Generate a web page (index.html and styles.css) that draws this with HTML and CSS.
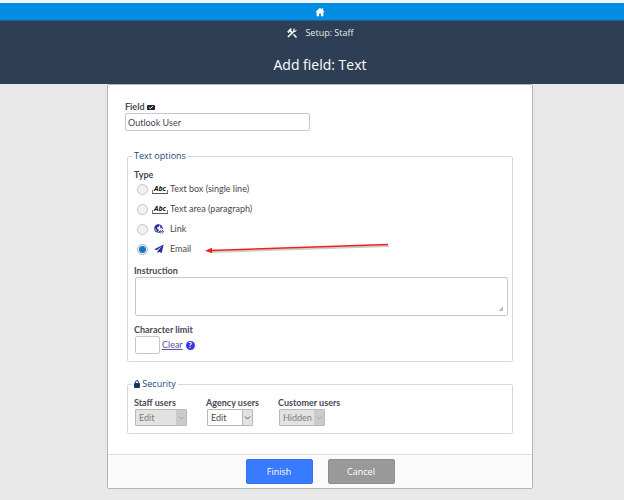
FILE: index.html
```html
<!DOCTYPE html>
<html lang="en">
<head>
    <meta charset="UTF-8">
    <meta name="viewport" content="width=device-width, initial-scale=1.0">
    <title>Add field: Text</title>
    <link rel="stylesheet" href="styles.css">
</head>
<body>

    <nav class="top-bar">
        <a href="#" aria-label="Home">
            <svg class="home-icon" viewBox="0 0 10 10"><path d="M5 .7L.4 5h1.200v4.300h2.500V6.400h1.800v2.900h2.500V5h1.200L8.200 3.500V1.300H7v1.200z"/></svg>
        </a>
    </nav>

    <header class="page-header">
        <a href="#" class="setup-link">
            <svg class="tools-icon" viewBox="0 0 24 24"><path d="M13.8 15.7l2.1-2.1 6.2 6.2-2.2 2.2zM17.5 10a3.5 3.5 0 0 0 3.2-4.9L18 7.8l-1.8-1.8 2.7-2.7a3.5 3.5 0 0 0-4.6 4.3l-1.9 1.9-1.8-1.8.7-.7-1.4-1.4 2.1-2.1a3 3 0 0 0-4.2 0L4.200 7l1.400 1.400H2.800l-.7.7 3.500 3.600.7-.7V9.200l1.400 1.400.7-.7 1.800 1.800L2.800 19.100l2.100 2.100L16.500 9.800a3.500 3.500 0 0 0 1 .2z"/></svg>
            <span>Setup: Staff</span>
        </a>
        <h1>Add field: Text</h1>
    </header>

    <form class="card">
        <div class="card-body">
            <div class="field-name">
                <label class="label" for="field-name">Field
                    <svg class="required-icon" viewBox="0 0 8 5"><rect width="8" height="5" rx="1" fill="#222230"/><path d="M2 2.500l1.200 1L6 1.200" fill="none" stroke="#fff"/></svg>
                </label>
                <input type="text" class="text-input" id="field-name" value="Outlook User">
            </div>

            <fieldset class="group">
                <legend>Text options</legend>
                <div class="label" id="type-label">Type</div>
                <div class="options" role="radiogroup" aria-labelledby="type-label">
                    <label class="option">
                        <input type="radio" name="type">
                        <span class="abc-icon">Abc</span>
                        <span>Text box (single line)</span>
                    </label>
                    <label class="option">
                        <input type="radio" name="type">
                        <span class="abc-icon">Abc</span>
                        <span>Text area (paragraph)</span>
                    </label>
                    <label class="option">
                        <input type="radio" name="type">
                        <svg class="option-icon" viewBox="0 0 10 10"><circle cx="4.500" cy="4.500" r="3.900" fill="#fff" stroke="#2b2b9c"/><path d="M1 2.500L3 .8l2.500.3L4.500 3 3 3.500l.5 1.500 1.500.5L4 8 2.500 7 2.200 5.200.8 4.200zM6.500 1.500L8.200 4 7 4.500 6 3z" fill="#2b2b9c"/><path d="M5.500 7.700h3M7 6.200h1.600a1.200 1.200 0 0 1 0 3H7.800" fill="none" stroke="#fff" stroke-width="2"/><path d="M5.200 7.800h3.300M6.600 6.400L5.200 7.800l1.400 1.400M8.200 6.200l1.400 1.600-1.400 1.400" fill="none" stroke="#2b2b9c"/></svg>
                        <span>Link</span>
                    </label>
                    <label class="option">
                        <input type="radio" name="type" checked>
                        <svg class="option-icon" viewBox="0 0 10 10"><path d="M9.700.5L.3 5.200l2.300 1.100L8 2.200 3.600 6.900v2.600l1.500-1.700 2.600 1.200z" fill="#2b2b9c"/></svg>
                        <span>Email</span>
                        <svg class="arrow" viewBox="0 0 186 12">
                            <path d="M7 9L184 3" stroke="#ccc" stroke-width="2"/>
                            <path d="M5 7.500L183 1.500" stroke="#f21d1d" stroke-width="1.500"/>
                            <path d="M0 7.700L7 4.700V10.300z" fill="#f21d1d"/>
                        </svg>
                    </label>
                </div>

                <label class="label" for="instruction">Instruction</label>
                <textarea class="text-input" id="instruction"></textarea>

                <label class="label" for="limit">Character limit</label>
                <div class="limit-row">
                    <input type="text" class="text-input limit-input" id="limit">
                    <a href="#" class="clear-link">Clear</a>
                    <button type="button" class="help" aria-label="Help">?</button>
                </div>
            </fieldset>

            <fieldset class="group">
                <legend>
                    <svg class="lock-icon" viewBox="0 0 6 8"><path d="M1.500 3.500V2.200a1.500 1.500 0 0 1 3 0v1.300" fill="none" stroke="#12346b"/><rect y="3" width="6" height="5" rx="1" fill="#12346b"/></svg>
                    Security
                </legend>
                <div class="security">
                    <div>
                        <label class="label" for="staff">Staff users</label>
                        <select id="staff" class="wide" disabled><option>Edit</option></select>
                    </div>
                    <div>
                        <label class="label" for="agency">Agency users</label>
                        <select id="agency"><option>Edit</option></select>
                    </div>
                    <div>
                        <label class="label" for="customer">Customer users</label>
                        <select id="customer" disabled><option>Hidden</option></select>
                    </div>
                </div>
            </fieldset>
        </div>

        <footer class="card-footer">
            <button type="submit" class="btn btn-finish">Finish</button>
            <button type="button" class="btn btn-cancel">Cancel</button>
        </footer>
    </form>

</body>
</html>
```
FILE: styles.css
```css
:root {
    --navy: #2e3e54;
    --blue: #028de2;
    --text: #484852;
    --border: #c6c6cc;
    --ui-font: "Open Sans", "Noto Sans", sans-serif;
    --form-font: Lato, sans-serif;
}

* {
    box-sizing: border-box;
}

body {
    margin: 0;
    background: #e8e8e8;
    color: var(--text);
    font: 9px/12px var(--form-font);
}

.top-bar {
    display: flex;
    justify-content: center;
    height: 21px;
    padding: 4px 0 0 16px;
    border-top: 3px solid #f4f4f4;
    border-bottom: 1px solid #21608f;
    background: var(--blue);
}

.top-bar a {
    display: flex;
    height: 10px;
}

.home-icon {
    width: 10px;
    height: 10px;
    fill: #fff;
}

.page-header {
    display: flex;
    flex-direction: column;
    align-items: center;
    gap: 15px;
    height: 63px;
    padding: 6px 0 0 16px;
    background: var(--navy);
    color: #fff;
    font-family: var(--ui-font);
}

.setup-link {
    display: flex;
    align-items: center;
    gap: 7px;
    color: #e6e9ed;
    text-decoration: none;
}

.tools-icon {
    width: 12px;
    height: 12px;
    fill: #fff;
}

h1 {
    margin: 0;
    font-size: 14px;
    line-height: 22px;
    font-weight: 400;
}

.card {
    margin: 0 91px 12px 107px;
    border: 1px solid #b5b5b5;
    border-radius: 2px;
    background: #fff;
}

.card-body {
    padding: 16px 19px 20px;
}

.label {
    display: block;
    font-weight: 700;
}

.field-name {
    margin: 0 0 19px -2px;
}

.required-icon {
    width: 8px;
    height: 5px;
}

.text-input {
    display: block;
    width: 100%;
    height: 18px;
    padding: 0 2px;
    border: 1px solid var(--border);
    border-radius: 2px;
    background: #fff;
    color: var(--text);
    font: 9px/12px var(--form-font);
}

.field-name .text-input {
    width: 185px;
}

.group {
    margin: 0;
    padding: 7px 4px;
    border: 1px solid #d8d8d8;
    border-radius: 2px;
}

.group + .group {
    margin-top: 16px;
}

.group > .label,
.options,
.security {
    margin-left: 2px;
}

legend {
    padding: 0 2px;
    color: #244574;
    font-family: var(--ui-font);
}

.lock-icon {
    width: 6px;
    height: 8px;
    vertical-align: -1px;
}

.options {
    margin-top: -2px;
    margin-bottom: 6px;
}

.option {
    display: flex;
    align-items: center;
    height: 20px;
    padding-left: 3px;
}

.option input {
    appearance: none;
    width: 11px;
    height: 11px;
    margin: 0 4px 0 0;
    border: 1px solid #c4c4c4;
    border-radius: 50%;
    background: #f1f1f1;
}

.option input:checked {
    border-color: #9fb9cc;
    background: radial-gradient(circle, #1878b8 3px, #e6f0f7 4px);
}

.abc-icon {
    width: 16px;
    height: 9px;
    margin-right: 2px;
    border-bottom: 1px solid #555;
    background:
        linear-gradient(#777, #777) left bottom / 1px 3px no-repeat,
        linear-gradient(#777, #777) right bottom / 1px 3px no-repeat;
    color: #111;
    font: italic 700 7px/8px "Open Sans", sans-serif;
    text-align: center;
}

.option-icon {
    width: 10px;
    height: 10px;
    margin: 0 6px 0 2px;
}

.arrow {
    width: 186px;
    height: 12px;
    margin-left: 14px;
}

textarea.text-input {
    height: 39px;
    margin-bottom: 8px;
    resize: vertical;
}

textarea::-webkit-resizer {
    background: linear-gradient(135deg, #fff 60%, #bbb 60%) center / 6px 6px no-repeat;
}

#instruction,
.limit-row {
    margin-left: 3px;
}

#instruction {
    width: calc(100% - 3px);
}

.limit-row {
    display: flex;
    align-items: center;
    gap: 2px;
}

.limit-input {
    width: 25px;
}

.clear-link {
    color: #5750a5;
}

.help {
    width: 9px;
    height: 9px;
    padding: 0;
    margin-left: 1px;
    border: 0;
    border-radius: 50%;
    background: #3636e8;
    color: #fff;
    font: 700 8px/9px var(--form-font);
}

.security {
    display: grid;
    grid-template-columns: 72px 72px auto;
}

select {
    appearance: none;
    display: block;
    width: 46px;
    height: 17px;
    margin-left: 1px;
    padding: 0 12px 0 3px;
    border: 1px solid #b8b8b8;
    border-radius: 1px;
    background: url("data:image/svg+xml,%3Csvg xmlns='http://www.w3.org/2000/svg' viewBox='0 0 10 15'%3E%3Cpath d='M0 0h10v15H0z' fill='%23e2e2e2'/%3E%3Cpath d='M.5 0v15' stroke='%23b8b8b8'/%3E%3Cpath d='M3 6.500l2.500 2.500L8 6.500' fill='none' stroke='%23555'/%3E%3C/svg%3E") right / 10px 15px no-repeat #fff;
    color: var(--text);
    font: 9px/12px var(--form-font);
}

select.wide {
    width: 52px;
}

select:disabled {
    background-color: #e2e2e2;
    background-image: url("data:image/svg+xml,%3Csvg xmlns='http://www.w3.org/2000/svg' viewBox='0 0 10 15'%3E%3Cpath d='M0 0h10v15H0z' fill='%23cbcbcb'/%3E%3Cpath d='M3 6.500l2.500 2.500L8 6.500' fill='none' stroke='%23a0a0a0'/%3E%3C/svg%3E");
    color: #808080;
    opacity: 1;
}

.card-footer {
    display: flex;
    justify-content: center;
    gap: 15px;
    padding: 4px 0;
    border-top: 1px solid #ddd;
    background: #fbfbfb;
}

.btn {
    width: 67px;
    height: 25px;
    padding: 0;
    border: 1px solid #3374ee;
    border-radius: 2px;
    background: #397bff;
    color: #fff;
    font: 9px/12px var(--ui-font);
}

.btn-cancel {
    border-color: #8f8f8f;
    background: #999;
}
```
